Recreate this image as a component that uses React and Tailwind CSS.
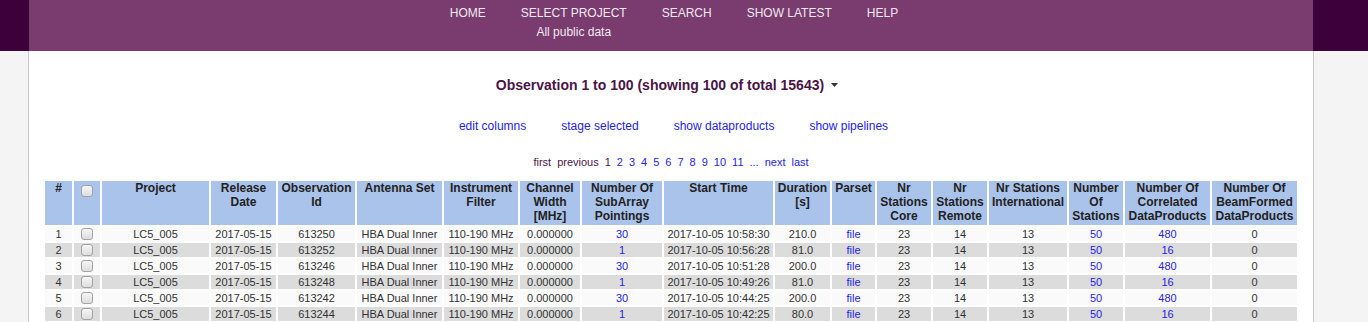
import React from "react";

const F = { fontFamily: '"Liberation Sans", Arial, sans-serif' };

const cols = [27, 26, 107, 65, 77, 85, 74, 60, 80, 109, 55, 43, 54, 54, 78, 54, 85, 85];

const headers = [
  ["#"],
  null,
  ["Project"],
  ["Release", "Date"],
  ["Observation", "Id"],
  ["Antenna Set"],
  ["Instrument", "Filter"],
  ["Channel", "Width", "[MHz]"],
  ["Number Of", "SubArray", "Pointings"],
  ["Start Time"],
  ["Duration", "[s]"],
  ["Parset"],
  ["Nr", "Stations", "Core"],
  ["Nr", "Stations", "Remote"],
  ["Nr Stations", "International"],
  ["Number", "Of", "Stations"],
  ["Number Of", "Correlated", "DataProducts"],
  ["Number Of", "BeamFormed", "DataProducts"],
];

const rows = [
  ["1", "613250", "30", "10:58:30", "210.0", "480"],
  ["2", "613252", "1", "10:56:28", "81.0", "16"],
  ["3", "613246", "30", "10:51:28", "200.0", "480"],
  ["4", "613248", "1", "10:49:26", "81.0", "16"],
  ["5", "613242", "30", "10:44:25", "200.0", "480"],
  ["6", "613244", "1", "10:42:25", "80.0", "16"],
];

function Box({ className = "" }) {
  return (
    <span
      className={
        "inline-block w-[12px] h-[12px] rounded-[3px] border border-[#a3a3a3] bg-gradient-to-b from-[#f6f6f6] to-[#dedede] align-top " +
        className
      }
    />
  );
}

const L = ({ children }) => <span className="text-[#2323ee]">{children}</span>;

export default function App() {
  const nav = ["HOME", "SELECT PROJECT", "SEARCH", "SHOW LATEST", "HELP"];
  const pages = ["2", "3", "4", "5", "6", "7", "8", "9", "10", "11", "..."];
  return (
    <div className="min-h-screen bg-[#f4f4f4]" style={F}>
      <div className="bg-[#3e003b]">
        <header className="ml-[29px] w-[1284px] h-[51px] bg-[#7a3b6f] flex justify-center gap-[35px] pl-[6px] pt-[6px] text-[12px] leading-[14px] text-[#f0eaf0]">
          {nav.map((n) => (
            <div key={n} className="flex flex-col items-center">
              <span>{n}</span>
              {n === "SELECT PROJECT" && <span className="mt-[5px]">All public data</span>}
            </div>
          ))}
        </header>
      </div>
      <main className="ml-[28px] w-[1286px] bg-white border-x border-[#c8c8c8] pt-[26px] pb-[20px]">
        <div className="flex justify-center items-center pr-[8px] text-[14px] leading-[16px] font-bold text-[#4b1447]">
          <span>Observation 1 to 100 (showing 100 of total 15643)</span>
          <svg width="7" height="4" viewBox="0 0 7 4" className="ml-[7px]">
            <path d="M0 0 L7 0 L3.5 4 Z" fill="#333" />
          </svg>
        </div>
        <div className="mt-[26px] flex justify-center gap-[35px] pl-[5px] text-[12px] leading-[14px] text-[#2323ee]">
          <span>edit columns</span>
          <span>stage selected</span>
          <span>show dataproducts</span>
          <span>show pipelines</span>
        </div>
        <div className="mt-[23px] flex justify-center gap-[6px] text-[11px] leading-[13px]">
          <span className="text-[#4b1447]">first</span>
          <span className="text-[#4b1447]">previous</span>
          <span className="text-[#4b1447]">1</span>
          {pages.map((p) => (
            <span key={p} className="text-[#2323ee]">{p}</span>
          ))}
          <span className="text-[#2323ee]">next</span>
          <span className="text-[#2323ee]">last</span>
        </div>
        <table className="mt-[10px] mx-auto w-[1256px] table-fixed border-separate border-spacing-[2px]">
          <colgroup>
            {cols.map((w, i) => (
              <col key={i} style={{ width: w }} />
            ))}
          </colgroup>
          <thead>
            <tr>
              {headers.map((h, i) => (
                <th
                  key={i}
                  className="h-[44px] p-0 align-top bg-[#aac3eb] text-[12px] leading-[14px] font-bold text-[#222] text-center whitespace-nowrap"
                >
                  {h ? (
                    h.map((l, j) => <div key={j}>{l}</div>)
                  ) : (
                    <Box className="mt-[4px]" />
                  )}
                </th>
              ))}
            </tr>
          </thead>
          <tbody>
            {rows.map((r, i) => {
              const bg = i % 2 === 0 ? "bg-[#fafafa]" : "bg-[#dcdcdc]";
              const cells = [
                r[0],
                <Box key="b" className="mt-[1px]" />,
                "LC5_005",
                "2017-05-15",
                r[1],
                "HBA Dual Inner",
                "110-190 MHz",
                "0.000000",
                <L key="s">{r[2]}</L>,
                "2017-10-05 " + r[3],
                r[4],
                <L key="f">file</L>,
                "23",
                "14",
                "13",
                <L key="n">50</L>,
                <L key="c">{r[5]}</L>,
                "0",
              ];
              return (
                <tr key={i}>
                  {cells.map((c, j) => (
                    <td
                      key={j}
                      className={
                        "h-[14px] p-0 text-center text-[11px] leading-[14px] text-[#333] whitespace-nowrap overflow-hidden " +
                        bg
                      }
                    >
                      {c}
                    </td>
                  ))}
                </tr>
              );
            })}
          </tbody>
        </table>
      </main>
    </div>
  );
}
